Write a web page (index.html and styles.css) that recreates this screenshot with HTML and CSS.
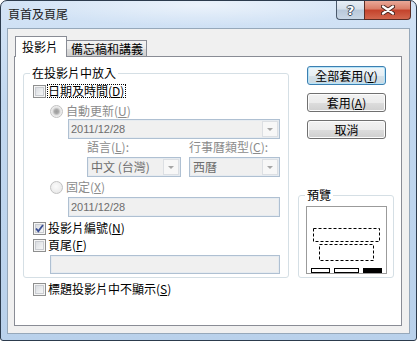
FILE: index.html
```html
<!DOCTYPE html>
<html lang="zh-Hant">
<head>
  <meta charset="UTF-8">
  <title>頁首及頁尾</title>
  <link rel="stylesheet" href="styles.css">
</head>
<body>

<div class="window">
  <div class="titlebar">
    <span class="title">頁首及頁尾</span>
    <div class="caption-btns">
      <span class="cap help">?</span>
      <span class="cap close">
        <svg width="14" height="10" viewBox="0 0 14 10">
          <path d="M2 1.5 L12 8.5 M12 1.5 L2 8.5" stroke="#4a2620" stroke-width="4.2" stroke-linecap="round"/>
          <path d="M2 1.5 L12 8.5 M12 1.5 L2 8.5" stroke="#ffffff" stroke-width="2.2" stroke-linecap="round"/>
        </svg>
      </span>
    </div>
  </div>

  <div class="client">
    <div class="tabs">
      <div class="tab active">投影片</div>
      <div class="tab">備忘稿和講義</div>
    </div>

    <div class="panel">
      <div class="panel-top">
        <!-- 左側群組 -->
        <fieldset class="group main-group">
          <legend>在投影片中放入</legend>

          <div class="row r1 ind-chk">
            <span class="chk"></span>
            <span class="lbl focus">日期及時間(<u>D</u>)</span>
          </div>

          <div class="row r2 ind-radio">
            <span class="radio on"></span>
            <span class="lbl dis">自動更新(<u>U</u>)</span>
          </div>

          <div class="row r3 ind-combo">
            <div class="combo wide"><span class="val num">2011/12/28</span><span class="arrow"></span></div>
          </div>

          <div class="row r4 ind-sub">
            <span class="sub-col lbl dis">語言(<u>L</u>):</span>
            <span class="sub-col lbl dis">行事曆類型(<u>C</u>):</span>
          </div>

          <div class="row r5 ind-sub">
            <div class="combo lang"><span class="val">中文 (台灣)</span><span class="arrow"></span></div>
            <div class="combo cal"><span class="val">西曆</span><span class="arrow"></span></div>
          </div>

          <div class="row r6 ind-radio">
            <span class="radio"></span>
            <span class="lbl dis">固定(<u>X</u>)</span>
          </div>

          <div class="row r7 ind-combo">
            <div class="textbox wide"><span class="val num">2011/12/28</span></div>
          </div>

          <div class="row r8 ind-chk">
            <span class="chk checked">
              <svg width="9" height="9" viewBox="0 0 9 9"><path d="M1 4.5 L3.3 7.2 L8 1" fill="none" stroke="#3a4f94" stroke-width="1.8"/></svg>
            </span>
            <span class="lbl">投影片編號(<u>N</u>)</span>
          </div>

          <div class="row r9 ind-chk">
            <span class="chk"></span>
            <span class="lbl">頁尾(<u>F</u>)</span>
          </div>

          <div class="row r10 ind-radio">
            <div class="textbox footer"></div>
          </div>
        </fieldset>

        <!-- 右側按鈕與預覽 -->
        <div class="side">
          <button class="btn default">全部套用(<u>Y</u>)</button>
          <button class="btn">套用(<u>A</u>)</button>
          <button class="btn">取消</button>

          <fieldset class="group preview-group">
            <legend>預覽</legend>
            <div class="preview">
              <svg width="79" height="66" viewBox="0 0 79 66">
                <rect x="6.5" y="21.5" width="66" height="13" fill="none" stroke="#000" stroke-dasharray="3 2"/>
                <rect x="12.5" y="37.5" width="54" height="16" fill="none" stroke="#000" stroke-dasharray="3 2"/>
                <rect x="4.5" y="61.5" width="18" height="4" fill="none" stroke="#000"/>
                <rect x="27.5" y="61.5" width="24" height="4" fill="none" stroke="#000"/>
                <rect x="56" y="61" width="19" height="5" fill="#000"/>
              </svg>
            </div>
          </fieldset>
        </div>
      </div>

      <div class="row bottom-row">
        <span class="chk"></span>
        <span class="lbl">標題投影片中不顯示(<u>S</u>)</span>
      </div>
    </div>
  </div>
</div>

</body>
</html>
```
FILE: styles.css
```css
body {
  margin: 0;
  background: #ffffff;
  font-family: "Noto Sans CJK TC", "Liberation Sans", sans-serif;
  font-size: 12px;
  color: #000;
}
.window {
  width: 417px;
  height: 341px;
  box-sizing: border-box;
  border: 1px solid #2c3b4d;
  border-radius: 7px 7px 3px 3px;
  padding: 0 6px 6px 6px;
  background: linear-gradient(to bottom, #d4e4f6 0%, #c2d8f0 30%, #b9d1eb 100%);
}
.titlebar {
  display: flex;
  align-items: flex-start;
  height: 27px;
  margin: 0 -6px;
  padding-left: 7px;
  background: radial-gradient(ellipse 260px 30px at 200px 4px, rgba(255,255,255,0.55), rgba(255,255,255,0) 70%);
  border-radius: 6px 6px 0 0;
}
.title {
  margin-top: 6px;
  line-height: 14px;
  color: #1b1b1b;
}
.caption-btns {
  display: flex;
  margin-left: auto;
  margin-right: 5px;
}
.cap {
  height: 19px;
  box-sizing: border-box;
  border: 1px solid #4a596b;
  border-top: none;
  display: flex;
  align-items: center;
  justify-content: center;
}
.help {
  width: 28px;
  border-right: none;
  border-radius: 0 0 0 4px;
  background: linear-gradient(to bottom, #e7eef6 0%, #d5dfea 45%, #b8c8da 50%, #c9d7e6 100%);
  color: #fff;
  font-family: "DejaVu Sans", sans-serif;
  font-weight: bold;
  font-size: 13px;
  line-height: 17px;
  text-shadow: -1px 0 #3c4a5c, 1px 0 #3c4a5c, 0 -1px #3c4a5c, 0 1px #3c4a5c;
}
.close {
  width: 47px;
  border-color: #5b2d25;
  border-radius: 0 0 4px 0;
  background: linear-gradient(to bottom, #e9a898 0%, #d97c67 45%, #c4422b 50%, #d2674e 100%);
}

.client {
  height: 306px;
  box-sizing: border-box;
  border: 1px solid #96a8ba;
  background: #f0f0f0;
}
.tabs {
  display: flex;
  align-items: flex-end;
  height: 20px;
  margin: 7px 0 0 7px;
}
.tab {
  box-sizing: border-box;
  border: 1px solid #898c95;
  border-bottom: none;
  line-height: 14px;
}
.tab.active {
  position: relative;
  z-index: 1;
  width: 52px;
  height: 21px;
  margin-bottom: -1px;
  background: #ffffff;
  padding: 3px 0 0 6px;
}
.tab:not(.active) {
  width: 81px;
  height: 16px;
  margin-left: -1px;
  padding: 1px 0 0 4px;
  background: linear-gradient(to bottom, #f3f3f3 0%, #ebebeb 50%, #dddddd 51%, #cfcfcf 100%);
}

.panel {
  width: 388px;
  height: 270px;
  box-sizing: border-box;
  margin-left: 6px;
  border: 1px solid #898c95;
  background: #ffffff;
  padding: 9px 7px 0 8px;
}
.panel-top {
  display: flex;
  gap: 9px;
}
.group {
  margin: 0;
  border: 1px solid #d5dfe5;
  border-radius: 3px;
  padding: 0;
  min-width: 0;
}
.group legend {
  margin-left: 6px;
  padding: 0 2px;
  line-height: 12px;
  height: 12px;
}
.main-group {
  width: 266px;
  box-sizing: border-box;
  margin-top: 1px;
  padding-bottom: 3px;
}

.row {
  display: flex;
  align-items: center;
  line-height: 14px;
}
.ind-chk { margin-left: 9px; }
.ind-radio { margin-left: 26px; }
.ind-combo { margin-left: 44px; }
.ind-sub { margin-left: 63px; gap: 8px; }

.r1 { margin-top: 5px; height: 14px; }
.r2 { margin-top: 6px; height: 14px; }
.r3 { margin-top: 1px; }
.r4 { margin-top: 1px; height: 14px; }
.r5 { margin-top: 3px; }
.r6 { margin-top: 3px; height: 14px; }
.r7 { margin-top: 3px; }
.r8 { margin-top: 4px; height: 14px; }
.r9 { margin-top: 3px; height: 14px; }
.r10 { margin-top: 3px; }

.lbl { margin-left: 2px; white-space: nowrap; }
.radio + .lbl { margin-left: 3px; }
.lbl.focus {
  margin-left: 1px;
  padding-right: 1px;
  border: 1px dotted #000;
  line-height: 12px;
}
.lbl.dis { color: #8b8b8b; }
.sub-col { margin-left: 0; }
.sub-col:first-child { width: 94px; }

.chk {
  width: 13px;
  height: 13px;
  box-sizing: border-box;
  border: 1px solid #8e8f8f;
  background: linear-gradient(135deg, #d2d5da 0%, #eceef0 60%, #fbfbfb 100%);
  box-shadow: inset 0 0 0 1px #f5f5f5, inset 0 0 0 2px #c9ccd1;
  display: flex;
  align-items: center;
  justify-content: center;
  flex: none;
}
.radio {
  width: 13px;
  height: 13px;
  box-sizing: border-box;
  border-radius: 50%;
  border: 1px solid #c2c2c2;
  background: radial-gradient(circle at 45% 40%, #fbfbfb 0, #e4e4e4 100%);
  flex: none;
}
.radio.on {
  background: radial-gradient(circle, #9c9c9c 0, #a8a8a8 2px, #c4c4c4 3px, #e2e2e2 4px, #f2f2f2 5.5px);
}

.combo, .textbox {
  box-sizing: border-box;
  display: flex;
  align-items: center;
  border: 1px solid #afc0d2;
  box-shadow: inset 0 0 0 1px #e6ebf0;
  background: #f0f0f0;
  color: #6d6d6d;
}
.combo { height: 20px; }
.textbox { height: 20px; }
.wide { width: 212px; }
.lang { width: 94px; }
.cal { width: 91px; }
.footer { width: 230px; height: 19px; }
.val {
  padding-left: 3px;
  line-height: 18px;
  white-space: nowrap;
}
.num {
  font-family: "Liberation Sans", sans-serif;
  font-size: 11px;
  padding-left: 2px;
}
.arrow {
  margin-left: auto;
  margin-right: 1px;
  width: 16px;
  height: 16px;
  box-sizing: border-box;
  border: 1px solid #dcdfe3;
  background: #f7f7f7;
  display: flex;
  align-items: center;
  justify-content: center;
}
.arrow::after {
  content: "";
  border-left: 3px solid transparent;
  border-right: 3px solid transparent;
  border-top: 3px solid #a6a6a6;
  margin-top: 1px;
}

.side {
  width: 96px;
  display: flex;
  flex-direction: column;
}
.btn {
  width: 79px;
  height: 19px;
  margin: 0 0 8px 9px;
  padding: 0;
  box-sizing: border-box;
  border: 1px solid #707070;
  border-radius: 3px;
  background: linear-gradient(to bottom, #f2f2f2 0%, #ebebeb 50%, #dddddd 51%, #cfcfcf 100%);
  box-shadow: inset 0 0 0 1px #fcfcfc;
  font-family: "Noto Sans CJK TC", sans-serif;
  font-size: 12px;
  line-height: 15px;
  color: #000;
}
.btn.default {
  border-color: #3c7fb1;
  box-shadow: inset 0 0 0 1px #b7e4f8;
  background: linear-gradient(to bottom, #f0f6f9 0%, #e6eef3 50%, #d6e1e8 51%, #c9d8e1 100%);
}
.preview-group {
  margin-top: auto;
  width: 96px;
  box-sizing: border-box;
  padding: 0 0 3px 0;
}
.preview {
  margin: 5px 0 0 7px;
  width: 81px;
  height: 68px;
  box-sizing: border-box;
  border: 1px solid #9b9b9b;
  background: #ffffff;
}
.preview svg { display: block; }

.bottom-row {
  margin: 4px 0 0 10px;
  height: 14px;
}
```
